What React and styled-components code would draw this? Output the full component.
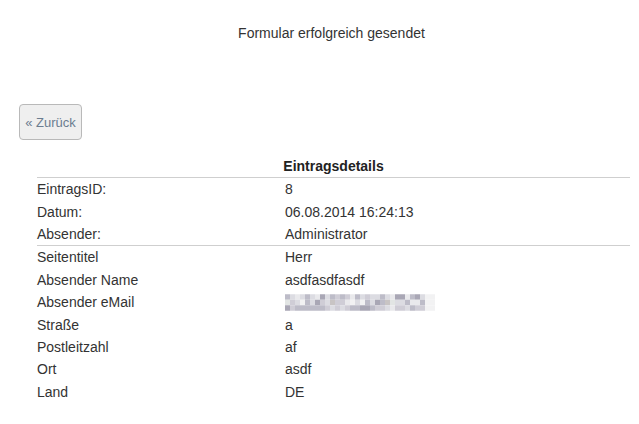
import React from 'react'
import styled, { createGlobalStyle } from 'styled-components'

const GlobalStyle = createGlobalStyle`
  html, body {
    margin: 0;
    padding: 0;
    background: #fff;
  }
  body {
    font-family: "Liberation Sans", Arial, sans-serif;
    font-size: 14px;
    color: #333;
  }
`

const Page = styled.div`
  width: 639px;
  height: 424px;
  box-sizing: border-box;
  padding-top: 23px;
`

const Notice = styled.div`
  padding-left: 24px;
  text-align: center;
  line-height: 20px;
  color: #333;
`

const BackButton = styled.button`
  display: block;
  margin: 61px 0 0 19px;
  height: 36px;
  width: 63px;
  padding: 0;
  border: 1px solid #b9b9b9;
  border-radius: 4px;
  background: #efefef;
  color: #6b7d90;
  font-family: "Liberation Sans", Arial, sans-serif;
  font-size: 13px;
  cursor: pointer;
`

const Details = styled.div`
  margin: 15px 0 0 37px;
  width: 593px;
`

const Heading = styled.div`
  height: 22px;
  line-height: 22px;
  text-align: center;
  font-weight: bold;
  color: #222;
  border-bottom: 1px solid #cfcfcf;
`

const Section = styled.div`
  display: grid;
  grid-template-columns: 248px 1fr;
  grid-auto-rows: 22.4px;
  align-items: center;
  border-bottom: ${p => (p.$divided ? '1px solid #cfcfcf' : 'none')};
  padding-bottom: ${p => (p.$divided ? '0' : '0')};
`

const Cell = styled.div`
  line-height: 20px;
  white-space: nowrap;
`

// pixelated, unreadable address
const Masked = () => {
  const cols = 30
  const rows = 3
  const shades = ['#e9e9ec', '#dcdce2', '#cfcdd6', '#bdbcc8', '#a9a7b5', '#e2e5e4', '#c8c4c4', '#f2f2f3']
  const cells = []
  let seed = 7
  for (let r = 0; r < rows; r++) {
    for (let c = 0; c < cols; c++) {
      seed = (seed * 9301 + 49297) % 233280
      let idx = Math.floor((seed / 233280) * shades.length)
      if (r !== 1 && idx > 3) idx -= 3
      if (c > 27) idx = 7
      cells.push(
        <rect key={`${r}-${c}`} x={c * 5} y={r * 5.5} width="5" height="5.5" fill={shades[idx]} />
      )
    }
  }
  return (
    <svg width="150" height="17" viewBox="0 0 150 16.5" style={{ display: 'block' }}>
      {cells}
    </svg>
  )
}

const head = [
  ['EintragsID:', '8'],
  ['Datum:', '06.08.2014 16:24:13'],
  ['Absender:', 'Administrator'],
]

const fields = [
  ['Seitentitel', 'Herr'],
  ['Absender Name', 'asdfasdfasdf'],
  ['Absender eMail', <Masked />],
  ['Straße', 'a'],
  ['Postleitzahl', 'af'],
  ['Ort', 'asdf'],
  ['Land', 'DE'],
]

export default function App() {
  return (
    <Page>
      <GlobalStyle />
      <Notice>Formular erfolgreich gesendet</Notice>
      <BackButton>« Zurück</BackButton>
      <Details>
        <Heading>Eintragsdetails</Heading>
        <Section $divided>
          {head.map(([label, value]) => (
            <React.Fragment key={label}>
              <Cell>{label}</Cell>
              <Cell>{value}</Cell>
            </React.Fragment>
          ))}
        </Section>
        <Section>
          {fields.map(([label, value]) => (
            <React.Fragment key={label}>
              <Cell>{label}</Cell>
              <Cell>{value}</Cell>
            </React.Fragment>
          ))}
        </Section>
      </Details>
    </Page>
  )
}
